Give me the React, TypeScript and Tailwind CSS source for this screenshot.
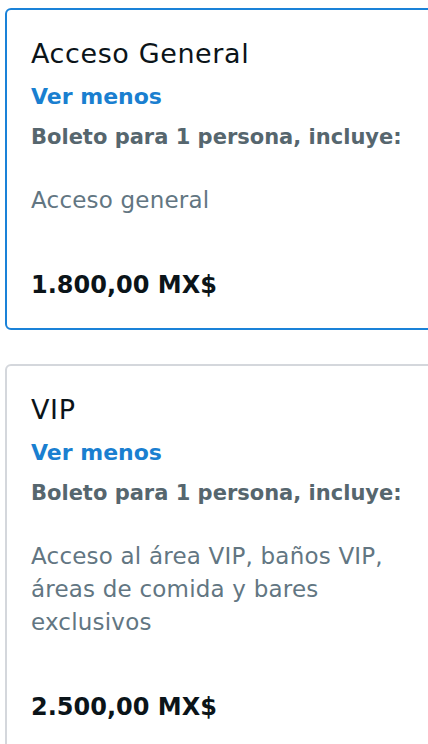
const tickets = [
  {
    name: "Acceso General",
    description: "Acceso general",
    price: "1.800,00 MX$",
    selected: true,
  },
  {
    name: "VIP",
    description: "Acceso al área VIP, baños VIP, áreas de comida y bares exclusivos",
    price: "2.500,00 MX$",
    selected: false,
  },
];

export default function App() {
  return (
    <div
      className="min-h-[744px] w-[428px] overflow-hidden bg-white pt-2 pl-[5px]"
      style={{ fontFamily: '"DejaVu Sans", sans-serif' }}
    >
      <div className="flex w-[460px] flex-col gap-[34px]">
        {tickets.map((t) => (
          <article
            key={t.name}
            className={
              t.selected
                ? "rounded-md border-2 border-[#1a82d8] pt-[28px] pr-6 pb-[28px] pl-6"
                : "rounded-md border-2 border-[#d4d7dc] pt-[28px] pr-6 pb-[28px] pl-6"
            }
          >
            <h3 className="text-[27px] leading-[32px] font-normal tracking-[0.6px] text-[#0b1419]">
              {t.name}
            </h3>
            <button className="mt-[13px] block text-[22px] leading-[28px] font-bold text-[#1a7fd0]">
              Ver menos
            </button>
            <p className="mt-[12px] w-[390px] text-[21px] leading-[28px] font-bold text-[#56666e]">
              Boleto para 1 persona, incluye:
            </p>
            <p className="mt-[33px] w-[372px] text-[23px] leading-[33px] font-normal tracking-[0.2px] text-[#627682]">
              {t.description}
            </p>
            <p className="mt-[53px] text-[24px] leading-[30px] font-bold text-[#0b1419]">{t.price}</p>
          </article>
        ))}
      </div>
    </div>
  );
}
